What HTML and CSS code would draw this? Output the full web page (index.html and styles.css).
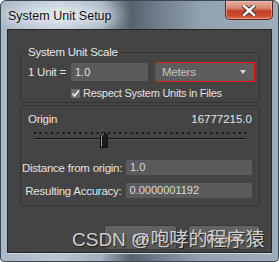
FILE: index.html
```html
<!DOCTYPE html>
<html lang="en">
<head>
    <meta charset="UTF-8">
    <title>System Unit Setup</title>
    <link rel="stylesheet" href="styles.css">
</head>
<body>
    <div class="window">
        <div class="titlebar">
            <span class="title">System Unit Setup</span>
            <div class="close-btn">
                <svg width="14" height="11" viewBox="0 0 14 11">
                    <path d="M2 1 L12 10 M12 1 L2 10" stroke="#3a2a28" stroke-width="4.4" stroke-linecap="square"/>
                    <path d="M2 1 L12 10 M12 1 L2 10" stroke="#ffffff" stroke-width="2.6" stroke-linecap="square"/>
                </svg>
            </div>
        </div>

        <div class="client">
            <fieldset class="group">
                <legend>System Unit Scale</legend>
                <div class="unit-row">
                    <span class="unit-label">1 Unit =</span>
                    <div class="field unit-field">1.0</div>
                    <div class="select">
                        <span>Meters</span>
                        <span class="arrow"></span>
                    </div>
                </div>
                <div class="check-row">
                    <span class="checkbox">
                        <svg width="9" height="9" viewBox="0 0 9 9">
                            <path d="M1.5 4.5 L3.5 7 L7.8 1.5" stroke="#f0f0f0" stroke-width="1.6" fill="none"/>
                        </svg>
                    </span>
                    <span>Respect System Units in Files</span>
                </div>
            </fieldset>

            <div class="origin-box">
                <div class="origin-head">
                    <span>Origin</span>
                    <span class="number">16777215.0</span>
                </div>
                <div class="slider">
                    <div class="ticks"></div>
                    <div class="track"></div>
                    <svg class="thumb" width="8" height="16" viewBox="0 0 8 16">
                        <path d="M0.5 15.5 V3 L4 0.5 L7.5 3 V15.5 Z" fill="#1c1c1c" stroke="#111"/>
                        <path d="M1.5 14.5 V3.4 L4 1.6" stroke="#9a9a9a" fill="none"/>
                    </svg>
                </div>
                <div class="form-row">
                    <label>Distance from origin:</label>
                    <div class="field wide-field">1.0</div>
                </div>
                <div class="form-row">
                    <label>Resulting Accuracy:</label>
                    <div class="field wide-field">0.0000001192</div>
                </div>
            </div>

            <div class="buttons">
                <button class="btn ok-btn">OK</button>
                <button class="btn cancel-btn">Cancel</button>
            </div>

            <div class="watermark">CSDN @咆哮的程序猿</div>
        </div>
    </div>
</body>
</html>
```

FILE: styles.css
```css
* {
    margin: 0;
    padding: 0;
    box-sizing: border-box;
}

body {
    width: 279px;
    height: 262px;
    overflow: hidden;
    font-family: 'Liberation Sans', Arial, sans-serif;
    background: #ffffff;
}

.window {
    width: 279px;
    height: 262px;
    border: 1px solid #3b4753;
    border-radius: 6px 6px 4px 4px;
    padding: 0 6px 8px 6px;
    display: flex;
    flex-direction: column;
    background:
        radial-gradient(ellipse 70px 22px at 60px 14px, rgba(235, 240, 245, 0.85), rgba(235, 240, 245, 0) 100%),
        linear-gradient(to right, #a9b8c6 0%, #b9c6d2 20%, #a3b1be 36%, #57636f 47%, #6d7b88 56%, #93a2b0 72%, #9eadba 100%);
}

.titlebar {
    height: 28px;
    display: flex;
    justify-content: space-between;
    align-items: flex-start;
}

.title {
    margin-top: 7px;
    margin-left: 1px;
    font-size: 12.5px;
    line-height: 16px;
    color: #111111;
    text-shadow: 0 0 6px rgba(255, 255, 255, 0.9);
}

.close-btn {
    width: 48px;
    height: 19px;
    margin-right: -1px;
    border: 1px solid #5b2a22;
    border-top: none;
    border-radius: 0 0 5px 5px;
    background: linear-gradient(to bottom, #e6b0a2 0%, #d78672 40%, #c2412a 55%, #c8492f 80%, #e0704f 100%);
    box-shadow: inset 0 0 0 1px rgba(255, 200, 180, 0.45);
    display: flex;
    align-items: center;
    justify-content: center;
}

.client {
    position: relative;
    height: 224px;
    background: #444444;
    border: 1px solid #262626;
    box-shadow: 0 1px 0 #cfd8e0;
    color: #e2e2e2;
    font-size: 11px;
    letter-spacing: -0.25px;
    white-space: nowrap;
}

.group {
    margin: 15px 11px 0 12px;
    border: 1px solid #343434;
    border-radius: 3px;
    padding: 0 0 2px 0;
    min-inline-size: 0;
}

.group legend {
    margin-left: 5px;
    padding: 0 2px;
    font-size: 11.5px;
    line-height: 14px;
    color: #e6e6e6;
}

.unit-row {
    display: flex;
    align-items: center;
    height: 20px;
    margin-top: 3px;
    padding-left: 7px;
}

.unit-label {
    width: 43px;
    font-size: 11.5px;
}

.field {
    height: 18px;
    line-height: 18px;
    padding-left: 4px;
    background: #5b5b5b;
    color: #e4e4e4;
    font-size: 11px;
    letter-spacing: 0;
}

.unit-field {
    width: 77px;
}

.select {
    width: 100px;
    height: 20px;
    margin-left: 7px;
    padding: 0 8px 0 6px;
    border: 1px solid #e8141c;
    background: #5d5d5d;
    color: #c4c4c4;
    font-size: 11.5px;
    display: flex;
    align-items: center;
    justify-content: space-between;
}

.arrow {
    width: 0;
    height: 0;
    border-left: 3.5px solid transparent;
    border-right: 3.5px solid transparent;
    border-top: 4px solid #dcdcdc;
}

.check-row {
    display: flex;
    align-items: center;
    height: 14px;
    margin-top: 4px;
    padding-left: 50px;
}

.checkbox {
    width: 9px;
    height: 9px;
    margin-right: 3px;
    background: #6c6c6c;
    display: flex;
}

.origin-box {
    margin: 2px 11px 0 12px;
    border: 1px solid #343434;
    border-radius: 3px;
    padding: 6px 7px 7px 7px;
}

.origin-head {
    display: flex;
    justify-content: space-between;
    line-height: 14px;
    font-size: 11.5px;
}

.number {
    letter-spacing: 0;
}

.slider {
    position: relative;
    height: 18px;
    margin: 3px 6px 0 6px;
}

.ticks {
    height: 2px;
    margin-top: 6px;
    background-image: linear-gradient(to right, #141414 2px, transparent 2px);
    background-size: 5.7px 2px;
}

.track {
    height: 2px;
    margin-top: 4px;
    background: #151515;
    border-bottom: 1px solid #555555;
}

.thumb {
    position: absolute;
    left: 66px;
    top: 0;
}

.form-row {
    display: flex;
    align-items: center;
    margin-top: 10px;
    height: 15px;
}

.form-row + .form-row {
    margin-top: 8px;
}

.form-row label {
    width: 100px;
    margin-left: -6px;
    margin-right: 4px;
    text-align: right;
    font-size: 11.5px;
}

.wide-field {
    width: 127px;
    height: 15px;
    line-height: 15px;
    color: #dadada;
}

.buttons {
    display: flex;
    justify-content: flex-end;
    gap: 11px;
    margin-top: 19px;
    padding-right: 11px;
}

.btn {
    height: 25px;
    border: 1px solid #3a3a3a;
    border-radius: 3px;
    background: linear-gradient(to bottom, #646464, #585858);
    color: #e4e4e4;
    font-family: 'Liberation Sans', Arial, sans-serif;
    font-size: 11.5px;
}

.ok-btn {
    width: 73px;
}

.cancel-btn {
    width: 72px;
}

.watermark {
    position: absolute;
    left: 64px;
    top: 198px;
    font-family: 'Liberation Sans', 'Noto Sans CJK SC', sans-serif;
    font-size: 19px;
    line-height: 24px;
    letter-spacing: 0;
    color: #cfcfcf;
    text-shadow: 1px 1px 1px rgba(0, 0, 0, 0.6);
}
```
